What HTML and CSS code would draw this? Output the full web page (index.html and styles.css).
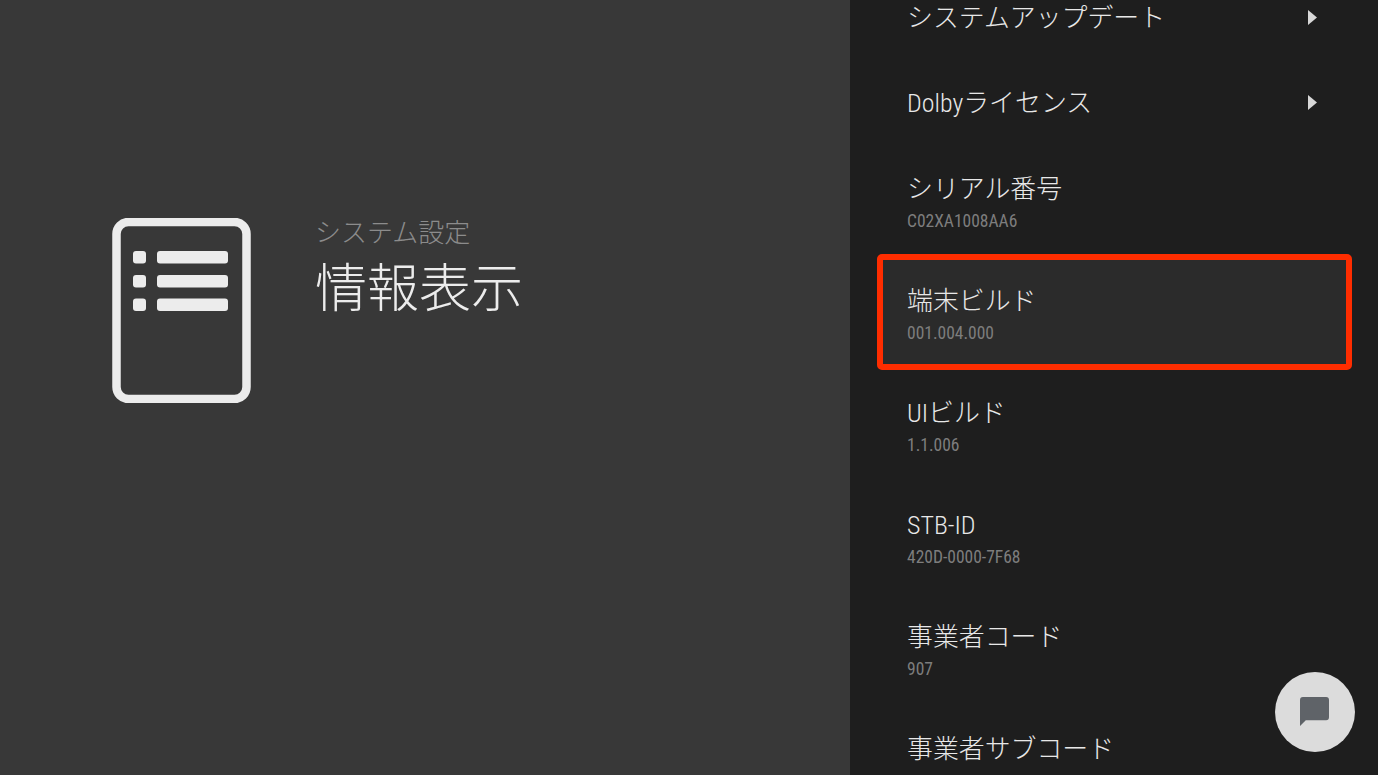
FILE: index.html
```html
<!DOCTYPE html>
<html lang="ja">

<head>
  <meta charset="UTF-8">
  <title>情報表示</title>
  <link rel="stylesheet" href="styles.css">
</head>

<body>
  <div class="screen">
    <div class="left-panel">
      <svg class="info-icon" viewBox="0 0 139 185" width="139" height="185">
        <rect x="4.5" y="4" width="130" height="177" rx="12" fill="none" stroke="#ececec" stroke-width="8.5"/>
        <rect x="21" y="33" width="13" height="12.5" rx="3" fill="#ececec"/>
        <rect x="45" y="33" width="71" height="12.5" rx="3" fill="#ececec"/>
        <rect x="21" y="57" width="13" height="12.5" rx="3" fill="#ececec"/>
        <rect x="45" y="57" width="71" height="12.5" rx="3" fill="#ececec"/>
        <rect x="21" y="80.5" width="13" height="12.5" rx="3" fill="#ececec"/>
        <rect x="45" y="80.5" width="71" height="12.5" rx="3" fill="#ececec"/>
      </svg>
      <div class="heading">
        <p class="heading-sub">システム設定</p>
        <h1 class="heading-title">情報表示</h1>
      </div>
    </div>

    <div class="right-panel">
      <ul class="menu">
        <li class="menu-item single">
          <span class="item-title">システムアップデート</span>
          <svg class="arrow" viewBox="0 0 9 15" width="9" height="15"><path d="M0 0L9 7.5L0 15Z"/></svg>
        </li>
        <li class="menu-item single">
          <span class="item-title"><span class="latin">Dolby</span>ライセンス</span>
          <svg class="arrow" viewBox="0 0 9 15" width="9" height="15"><path d="M0 0L9 7.5L0 15Z"/></svg>
        </li>
        <li class="menu-item">
          <span class="item-title">シリアル番号</span>
          <span class="item-value">C02XA1008AA6</span>
        </li>
        <li class="menu-item focused">
          <span class="item-title">端末ビルド</span>
          <span class="item-value">001.004.000</span>
        </li>
        <li class="menu-item">
          <span class="item-title"><span class="latin">UI</span>ビルド</span>
          <span class="item-value">1.1.006</span>
        </li>
        <li class="menu-item">
          <span class="item-title"><span class="latin">STB-ID</span></span>
          <span class="item-value">420D-0000-7F68</span>
        </li>
        <li class="menu-item">
          <span class="item-title">事業者コード</span>
          <span class="item-value">907</span>
        </li>
        <li class="menu-item">
          <span class="item-title">事業者サブコード</span>
        </li>
      </ul>
    </div>

    <button class="chat-button">
      <svg viewBox="0 0 30 30" width="29" height="29">
        <path d="M3 0H27Q30 0 30 3V21Q30 24 27 24H6L0 30V3Q0 0 3 0Z" fill="#5f6368"/>
      </svg>
    </button>
  </div>
</body>

</html>
```

FILE: styles.css
```css
* {
  box-sizing: border-box;
}

html,
body {
  margin: 0;
  padding: 0;
  height: 100%;
  overflow: hidden;
}

body {
  font-family: Roboto, "Noto Sans CJK JP", sans-serif;
  background: #1e1e1e;
}

.screen {
  position: relative;
  display: flex;
  width: 1378px;
  height: 775px;
  overflow: hidden;
}

.left-panel {
  display: flex;
  align-items: flex-start;
  width: 850px;
  padding: 218px 0 0 112px;
  background: #383838;
}

.info-icon {
  flex: none;
}

.heading {
  margin-left: 64px;
}

.heading-sub {
  margin: 0;
  color: #8c8c8c;
  font-size: 26px;
  font-weight: 300;
  line-height: 30px;
}

.heading-title {
  margin: 12px 0 0;
  color: #ececec;
  font-size: 52px;
  font-weight: 300;
  line-height: 60px;
}

.right-panel {
  flex: 1;
  background: #1e1e1e;
  overflow: hidden;
}

.menu {
  list-style: none;
  margin: -27px 0 0;
  padding: 0;
}

.menu-item {
  position: relative;
  display: flex;
  flex-direction: column;
  justify-content: flex-start;
  height: 112px;
  padding: 30px 0 0 57px;
}

.menu-item.single {
  height: 85px;
}

.menu-item.single + .single {
  height: 86px;
}

.menu-item.focused::before {
  content: "";
  position: absolute;
  top: -2px;
  left: 27px;
  box-sizing: border-box;
  width: 475px;
  height: 116px;
  background: #2b2b2b;
  border: 6px solid #ff2d00;
  border-radius: 5px;
}

.item-title {
  position: relative;
  color: #e8e8e8;
  font-size: 25.9px;
  font-weight: 300;
  line-height: 30px;
}

.latin {
  font-weight: 350;
  font-stretch: 85%;
}

.item-value {
  position: relative;
  margin-top: 8px;
  color: #7d7d7d;
  font-size: 17.5px;
  font-stretch: 85%;
  line-height: 18px;
}

.arrow {
  position: absolute;
  top: 37px;
  left: 458px;
  fill: #d8d8d8;
}

.chat-button {
  position: absolute;
  top: 672px;
  left: 1275px;
  display: flex;
  align-items: center;
  justify-content: center;
  width: 80px;
  height: 80px;
  padding: 0 2px 1px 0;
  border: none;
  border-radius: 50%;
  background: #dcdcdc;
}
```
